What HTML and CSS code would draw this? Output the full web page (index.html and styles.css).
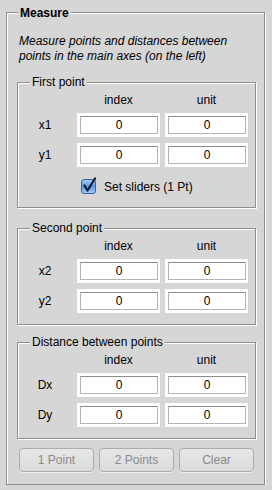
FILE: index.html
```html
<!DOCTYPE html>
<html>
<head>
<meta charset="utf-8">
<link rel="stylesheet" href="styles.css">
</head>
<body>
<div class="box outer">
  <span class="title bold">Measure</span>
  <p class="desc">Measure points and distances between points in the main axes (on the left)</p>

  <div class="box panel p1">
    <span class="title">First point</span>
    <div class="grid">
      <span></span><span class="hdr">index</span><span class="hdr">unit</span>
      <span class="lbl">x1</span><div class="field"><span>0</span></div><div class="field"><span>0</span></div>
      <span class="lbl">y1</span><div class="field"><span>0</span></div><div class="field"><span>0</span></div>
    </div>
    <div class="check">
      <svg class="cb" width="16" height="17" viewBox="0 0 16 17">
        <defs>
          <linearGradient id="g" x1="0" y1="0" x2="0" y2="1">
            <stop offset="0" stop-color="#a9cdf5"/>
            <stop offset="0.5" stop-color="#5b9be3"/>
            <stop offset="1" stop-color="#9fd0f8"/>
          </linearGradient>
        </defs>
        <rect x="0.5" y="2.5" width="14" height="14" rx="2.5" fill="url(#g)" stroke="#3b64a0"/>
        <path d="M3.5 8.5 L6.5 13.5 L14 1.5" fill="none" stroke="#101a2c" stroke-width="2.2" stroke-linecap="round" stroke-linejoin="round"/>
      </svg>
      <span>Set sliders (1 Pt)</span>
    </div>
  </div>

  <div class="box panel p2">
    <span class="title">Second point</span>
    <div class="grid">
      <span></span><span class="hdr">index</span><span class="hdr">unit</span>
      <span class="lbl">x2</span><div class="field"><span>0</span></div><div class="field"><span>0</span></div>
      <span class="lbl">y2</span><div class="field"><span>0</span></div><div class="field"><span>0</span></div>
    </div>
  </div>

  <div class="box panel p3">
    <span class="title">Distance between points</span>
    <div class="grid">
      <span></span><span class="hdr">index</span><span class="hdr">unit</span>
      <span class="lbl">Dx</span><div class="field"><span>0</span></div><div class="field"><span>0</span></div>
      <span class="lbl">Dy</span><div class="field"><span>0</span></div><div class="field"><span>0</span></div>
    </div>
  </div>

  <div class="buttons">
    <button class="btn" disabled>1 Point</button>
    <button class="btn" disabled>2 Points</button>
    <button class="btn" disabled>Clear</button>
  </div>
</div>
</body>
</html>
```

FILE: styles.css
```css
html, body {
  margin: 0;
  padding: 0;
  background: #d6d6d6;
}
body {
  font-family: "Liberation Sans", Arial, sans-serif;
  font-size: 12px;
  line-height: 14px;
  color: #000;
}
.box {
  position: relative;
  box-sizing: border-box;
  border: 1px solid #8e8e8e;
  box-shadow: inset 1px 1px 0 #fff, 1px 1px 0 #fff;
}
.outer {
  margin: 12px 0 0 6px;
  width: 259px;
  padding: 21px 0 12px 10px;
}
.title {
  position: absolute;
  top: -8px;
  left: 12px;
  padding: 0 2px;
  background: #d6d6d6;
  white-space: nowrap;
}
.outer > .title {
  top: -7px;
  left: 11px;
}
.bold {
  font-weight: bold;
}
.desc {
  margin: 0 0 18px 2px;
  font-style: italic;
  line-height: 15px;
  width: 230px;
}
.panel {
  width: 239px;
  padding: 10px 0 11px 0;
}
.p1 {
  padding-bottom: 12px;
}
.p2 {
  margin-top: 20px;
}
.p3 {
  margin-top: 17px;
}
.grid {
  display: grid;
  grid-template-columns: 54px 83px 83px;
  column-gap: 5px;
  row-gap: 6px;
}
.hdr, .lbl {
  text-align: center;
}
.lbl {
  align-self: center;
}
.field {
  box-sizing: border-box;
  height: 24px;
  background: #fff;
  padding: 3px 2px 3px 3px;
}
.field span {
  display: block;
  box-sizing: border-box;
  height: 100%;
  border: 1px solid #b4b4b4;
  border-top-color: #8c8c8c;
  text-align: center;
  line-height: 16px;
}
.check {
  display: flex;
  align-items: center;
  margin: 11px 0 0 63px;
  height: 17px;
  gap: 7px;
}
.cb {
  display: block;
  margin-top: -2px;
}
.buttons {
  display: flex;
  gap: 5px;
  margin: 9px 0 0 2px;
}
.btn {
  box-sizing: border-box;
  width: 75px;
  height: 24px;
  border: 1px solid #acacac;
  border-radius: 4px;
  background: linear-gradient(#e6e6e6, #dcdcdc);
  color: #8a8a8a;
  font-family: "Liberation Sans", Arial, sans-serif;
  font-size: 12px;
  padding: 0;
  box-shadow: 0 1px 0 #efefef;
}
```
